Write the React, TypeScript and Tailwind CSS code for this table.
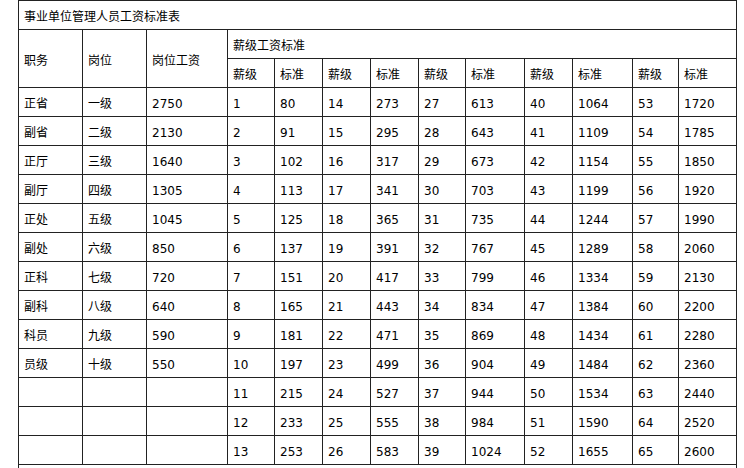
import React from "react";

const rows: string[][] = [
  ["正省", "一级", "2750", "1", "80", "14", "273", "27", "613", "40", "1064", "53", "1720"],
  ["副省", "二级", "2130", "2", "91", "15", "295", "28", "643", "41", "1109", "54", "1785"],
  ["正厅", "三级", "1640", "3", "102", "16", "317", "29", "673", "42", "1154", "55", "1850"],
  ["副厅", "四级", "1305", "4", "113", "17", "341", "30", "703", "43", "1199", "56", "1920"],
  ["正处", "五级", "1045", "5", "125", "18", "365", "31", "735", "44", "1244", "57", "1990"],
  ["副处", "六级", "850", "6", "137", "19", "391", "32", "767", "45", "1289", "58", "2060"],
  ["正科", "七级", "720", "7", "151", "20", "417", "33", "799", "46", "1334", "59", "2130"],
  ["副科", "八级", "640", "8", "165", "21", "443", "34", "834", "47", "1384", "60", "2200"],
  ["科员", "九级", "590", "9", "181", "22", "471", "35", "869", "48", "1434", "61", "2280"],
  ["员级", "十级", "550", "10", "197", "23", "499", "36", "904", "49", "1484", "62", "2360"],
  ["", "", "", "11", "215", "24", "527", "37", "944", "50", "1534", "63", "2440"],
  ["", "", "", "12", "233", "25", "555", "38", "984", "51", "1590", "64", "2520"],
  ["", "", "", "13", "253", "26", "583", "39", "1024", "52", "1655", "65", "2600"],
];

const widths = [64, 64, 81, 47, 48, 48, 48, 47, 59, 48, 60, 46, 58];

const cell = "border border-[#222] px-[5px] pt-[4px] pb-0 align-middle text-left font-normal";

export default function App() {
  return (
    <div
      className="w-[744px] h-[468px] overflow-hidden bg-white pl-[18px] text-[12px] text-black leading-[16px]"
      style={{ fontFamily: '"DejaVu Sans", "Noto Sans CJK SC", sans-serif' }}
    >
      <table className="table-fixed border-collapse w-[719px]">
        <colgroup>
          {widths.map((w, i) => (
            <col key={i} style={{ width: w }} />
          ))}
        </colgroup>
        <tbody>
          <tr className="h-[29px]">
            <td className={cell} colSpan={13}>
              事业单位管理人员工资标准表
            </td>
          </tr>
          <tr className="h-[29px]">
            <td className={cell} rowSpan={2}>职务</td>
            <td className={cell} rowSpan={2}>岗位</td>
            <td className={cell} rowSpan={2}>岗位工资</td>
            <td className={cell} colSpan={10}>薪级工资标准</td>
          </tr>
          <tr className="h-[29px]">
            {Array.from({ length: 5 }).flatMap((_, i) => [
              <td key={`a${i}`} className={cell}>薪级</td>,
              <td key={`b${i}`} className={cell}>标准</td>,
            ])}
          </tr>
          {rows.map((r, ri) => (
            <tr key={ri} className="h-[29px]">
              {r.map((c, ci) => (
                <td key={ci} className={cell}>
                  {c}
                </td>
              ))}
            </tr>
          ))}
          <tr className="h-[29px]">
            <td className={cell} colSpan={13}></td>
          </tr>
        </tbody>
      </table>
    </div>
  );
}
